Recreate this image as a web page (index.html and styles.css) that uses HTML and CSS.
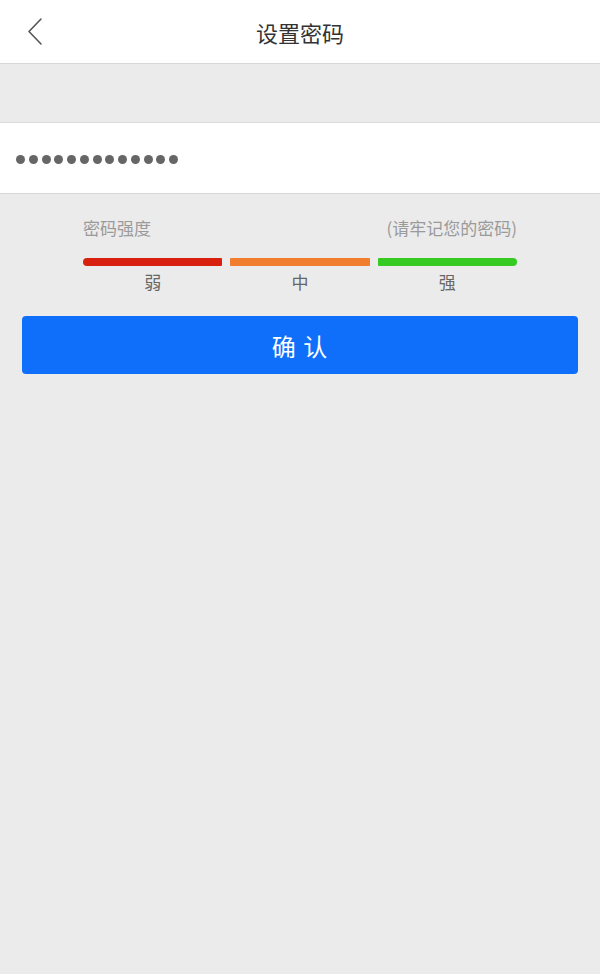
FILE: index.html
```html
<!DOCTYPE html>
<html lang="zh-CN">
<head>
<meta charset="utf-8">
<title>设置密码</title>
<link rel="stylesheet" href="styles.css">
</head>
<body>
<header class="topbar">
  <a class="back" aria-label="返回">
    <svg width="20" height="30" viewBox="0 0 20 30"><polyline points="14,2 2,14.5 14,27" fill="none" stroke="#555" stroke-width="1.6" stroke-linecap="round" stroke-linejoin="round"/></svg>
  </a>
  <h1 class="title">设置密码</h1>
</header>
<div class="spacer"></div>
<div class="field">
  <div class="dots">
    <span></span><span></span><span></span><span></span><span></span><span></span><span></span><span></span><span></span><span></span><span></span><span></span><span></span>
  </div>
</div>
<section class="strength">
  <div class="strength-head">
    <span>密码强度</span>
    <span>(请牢记您的密码)</span>
  </div>
  <div class="bars">
    <div class="level"><div class="bar weak"></div><div class="lvl-label">弱</div></div>
    <div class="level"><div class="bar mid"></div><div class="lvl-label">中</div></div>
    <div class="level"><div class="bar strong"></div><div class="lvl-label">强</div></div>
  </div>
</section>
<div class="actions">
  <button class="confirm">确 认</button>
</div>
</body>
</html>
```

FILE: styles.css
```css
html, body {
  margin: 0;
  padding: 0;
}
body {
  background: #ebebeb;
  font-family: "Noto Sans CJK SC", "Noto Sans", sans-serif;
  width: 600px;
  min-height: 974px;
}
.topbar {
  height: 63px;
  background: #fff;
  border-bottom: 1px solid #d8d8d8;
  display: flex;
  align-items: center;
  justify-content: center;
  position: relative;
}
.back {
  position: absolute;
  left: 27px;
  top: 17px;
  display: block;
  width: 20px;
  height: 30px;
}
.title {
  margin: 0;
  font-size: 22px;
  font-weight: normal;
  color: #333;
  line-height: 1;
}
.spacer {
  height: 58px;
}
.field {
  height: 70px;
  background: #fff;
  border-top: 1px solid #dcdcdc;
  border-bottom: 1px solid #d8d8d8;
  display: flex;
  align-items: center;
  padding-left: 16px;
}
.dots {
  display: flex;
  gap: 3.75px;
  margin-top: 2px;
}
.dots span {
  width: 9px;
  height: 9px;
  border-radius: 50%;
  background: #666;
}
.strength {
  padding: 23px 83px 0 83px;
}
.strength-head {
  display: flex;
  justify-content: space-between;
  color: #9a9a9a;
  font-size: 17px;
  line-height: 22px;
  height: 22px;
}
.bars {
  display: flex;
  gap: 8px;
  margin-top: 19px;
}
.level {
  flex: 1;
  display: flex;
  flex-direction: column;
  align-items: center;
}
.bar {
  width: 100%;
  height: 8px;
  border-radius: 1px;
}
.bar.weak {
  background: #d8200e;
  border-radius: 4px 1px 1px 4px;
}
.bar.mid {
  background: #f07e2e;
}
.bar.strong {
  background: #35cb22;
  border-radius: 1px 4px 4px 1px;
}
.lvl-label {
  margin-top: 5px;
  font-size: 17px;
  line-height: 22px;
  color: #666;
}
.actions {
  padding: 23px 22px 0 22px;
}
.confirm {
  display: block;
  width: 100%;
  height: 58px;
  border: 0;
  border-radius: 4px;
  background: #0f6ffa;
  color: #fff;
  font-family: "Noto Sans CJK SC", "Noto Sans", sans-serif;
  font-size: 24px;
  letter-spacing: 1px;
  padding: 0;
}
```
